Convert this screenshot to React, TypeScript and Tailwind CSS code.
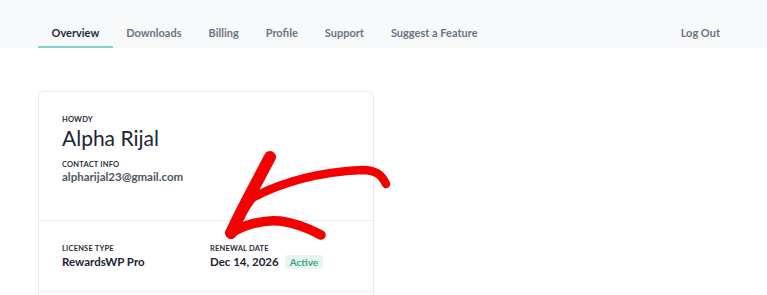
import React from "react"

const tabs = ["Overview", "Downloads", "Billing", "Profile", "Support", "Suggest a Feature"]

function Arrow() {
  return (
    <svg
      className="absolute left-0 top-0 pointer-events-none"
      width="767"
      height="295"
      viewBox="0 0 767 295"
    >
      <g fill="none" stroke="#f40000" strokeLinecap="round" strokeLinejoin="round">
        <path d="M270 157 C 258 180, 244 205, 231 233" strokeWidth="12" />
        <path d="M386 184 C 382 175, 376 170, 362 170 C 320 172, 282 182, 252 198" strokeWidth="8.5" />
        <path d="M231 233 C 242 226, 262 219, 280 221 C 296 223, 310 229, 321 235" strokeWidth="9.5" />
        <path d="M236 224 C 242 212, 248 204, 254 196" strokeWidth="8" />
      </g>
    </svg>
  )
}

export default function App() {
  return (
    <div className="relative h-[295px] w-[767px] overflow-hidden bg-white font-['Lato',sans-serif]">
      {/* Top nav */}
      <nav className="flex h-[48px] items-end bg-[#f8f9fb] pl-[38px] pr-[47px]">
        {tabs.map((t, i) => (
          <div
            key={t}
            className={
              i === 0
                ? "flex h-[48px] items-end border-b-2 border-[#7fd3c8] px-[13.5px] pb-[6px] text-[11px] font-bold leading-[14px] text-[#1f2a3c]"
                : "flex h-[48px] items-end border-b-2 border-transparent px-[13.5px] pb-[6px] text-[11px] font-bold leading-[14px] text-[#6b7484]"
            }
          >
            {t}
          </div>
        ))}
        <div className="ml-auto flex h-[48px] items-end pb-[8px] text-[11px] font-bold leading-[14px] text-[#6b7484]">
          Log Out
        </div>
      </nav>

      {/* Card */}
      <div className="ml-[38px] mt-[43px] w-[336px] rounded-md border border-[#e9ebee] bg-white">
        <div className="px-[23px] pt-[23px] pb-[36px]">
          <div className="text-[7.5px] font-bold uppercase leading-[9px] tracking-wide text-[#2b2f38]">Howdy</div>
          <div className="mt-[2px] text-[21px] leading-[24px] text-[#1b2438]">Alpha Rijal</div>
          <div className="mt-[10px] text-[7.5px] font-bold uppercase leading-[9px] tracking-wide text-[#2b2f38]">Contact Info</div>
          <div className="mt-[1px] text-[11.5px] font-bold leading-[14px] text-[#4d5565]">alpharijal23@gmail.com</div>
        </div>
        <div className="flex border-t border-[#eceef1] px-[23px] pt-[23px] pb-[21px]">
          <div className="w-[148px]">
            <div className="text-[7.5px] font-bold uppercase leading-[9px] tracking-wide text-[#2b2f38]">License Type</div>
            <div className="mt-[1px] text-[11.5px] font-bold leading-[16px] text-[#1b2438]">RewardsWP Pro</div>
          </div>
          <div>
            <div className="text-[7.5px] font-bold uppercase leading-[9px] tracking-wide text-[#2b2f38]">Renewal Date</div>
            <div className="mt-[1px] flex items-center gap-[6px]">
              <span className="text-[11.5px] font-bold leading-[16px] text-[#1b2438]">Dec 14, 2026</span>
              <span className="rounded-[3px] bg-[#e7f4ef] px-[5px] py-[1px] text-[10px] font-bold leading-[12px] text-[#3ca57c]">Active</span>
            </div>
          </div>
        </div>
        <div className="h-[20px] border-t border-[#eceef1]" />
      </div>

      <Arrow />
    </div>
  )
}
